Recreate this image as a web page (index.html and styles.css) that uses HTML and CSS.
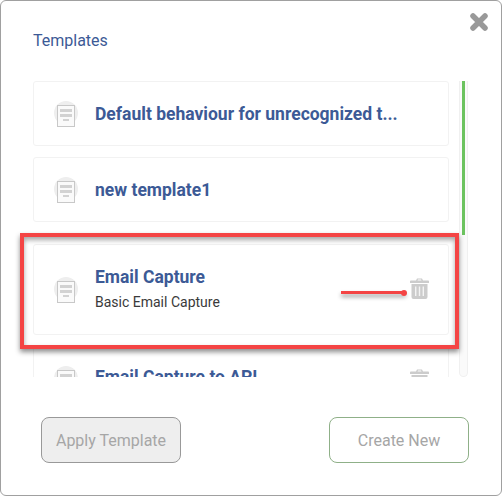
FILE: index.html
```html
<!DOCTYPE html>
<html lang="en">
<head>
<meta charset="utf-8">
<title>Templates</title>
<link rel="stylesheet" href="styles.css">
</head>
<body>
<svg class="defs" width="0" height="0" aria-hidden="true">
  <symbol id="doc" viewBox="0 0 24 26">
    <circle cx="12" cy="12" r="12" fill="#eeeeee"/>
    <rect x="3.500" y="4.500" width="17" height="21" fill="#fafafa" stroke="#c8c8c8" stroke-width="1"/>
    <rect x="6" y="8" width="12" height="3" fill="#d2d2d2"/>
    <rect x="6" y="13" width="12" height="3" fill="#d2d2d2"/>
    <rect x="9" y="18" width="6" height="2" fill="#d2d2d2"/>
  </symbol>
  <symbol id="trash" viewBox="0 0 19 21">
    <path fill="#cccccc" d="M6 2.600 7 .6h5l1 2h5.200a.8.8 0 0 1 .8.800V5H0V3.400a.8.8 0 0 1 .8-.8zM7.500 2.600h4l-.5-1H8zM1.500 6h16v13a2 2 0 0 1-2 2h-12a2 2 0 0 1-2-2z"/>
    <path fill="#f4f4f4" d="M5 8.500h1.400v9.500H5zM8.800 8.500h1.400v9.500H8.800zM12.600 8.500H14v9.500h-1.400z"/>
  </symbol>
</svg>
<main class="modal">
  <button class="close" type="button" aria-label="Close">
    <svg width="18" height="18" viewBox="0 0 18 18"><path d="M3 3 15 15M15 3 3 15" stroke="#999999" stroke-width="5.500" stroke-linecap="round"/></svg>
  </button>
  <h1 class="title">Templates</h1>
  <div class="list-wrap">
    <div class="list">
      <article class="card">
        <svg class="doc"><use href="#doc"/></svg>
        <div class="text"><h2 class="name">Default behaviour for unrecognized t...</h2></div>
      </article>
      <article class="card">
        <svg class="doc"><use href="#doc"/></svg>
        <div class="text"><h2 class="name">new template1</h2></div>
      </article>
      <article class="card card-tall">
        <svg class="doc"><use href="#doc"/></svg>
        <div class="text text-stacked">
          <h2 class="name">Email Capture</h2>
          <p class="desc">Basic Email Capture</p>
        </div>
        <svg class="trash"><use href="#trash"/></svg>
      </article>
      <article class="card card-clipped">
        <svg class="doc"><use href="#doc"/></svg>
        <div class="text"><h2 class="name">Email Capture to API</h2></div>
        <svg class="trash"><use href="#trash"/></svg>
      </article>
    </div>
    <div class="scrollbar"><div class="thumb"></div></div>
  </div>
  <footer class="actions">
    <button class="btn btn-apply" type="button">Apply Template</button>
    <button class="btn btn-create" type="button">Create New</button>
  </footer>
  <div class="callout"></div>
  <div class="arrow"></div>
</main>
</body>
</html>
```
FILE: styles.css
```css
* { box-sizing: border-box; }
html, body { margin: 0; padding: 0; }
body {
  width: 502px;
  height: 496px;
  overflow: hidden;
  background: #ffffff;
  font-family: Roboto, "Liberation Sans", sans-serif;
}
.defs { position: absolute; }
.modal {
  position: relative;
  width: 502px;
  height: 496px;
  border: 1px solid #a0a0a0;
  border-radius: 6px;
  background: #ffffff;
  padding: 30px 32px 32px 32px;
  display: flex;
  flex-direction: column;
}
.close {
  position: absolute;
  top: 12px;
  right: 13px;
  width: 18px;
  height: 18px;
  padding: 0;
  border: 0;
  background: none;
  display: flex;
}
.title {
  margin: 0 0 31px 0;
  height: 19px;
  font-size: 16px;
  line-height: 19px;
  font-weight: 400;
  color: #3c5a96;
}
.list-wrap {
  height: 296px;
  display: flex;
  gap: 10px;
  overflow: hidden;
}
.list {
  width: 416px;
  display: flex;
  flex-direction: column;
  gap: 11px;
  overflow: hidden;
}
.card {
  flex: none;
  height: 65px;
  border: 1px solid #f2f2f2;
  border-radius: 3px;
  padding: 0 19px 0 20px;
  display: flex;
  align-items: center;
  gap: 17px;
}
.card-tall {
  height: 91px;
  margin-top: 11px;
}
.card-clipped {
  height: 91px;
  align-items: flex-start;
  padding-top: 19px;
}
.card-clipped .trash { margin-top: 3px; }
.doc {
  flex: none;
  width: 24px;
  height: 26px;
}
.text {
  flex: 1;
  min-width: 0;
}
.text-stacked { margin-bottom: 3px; }
.name {
  margin: 0;
  font-size: 17.500px;
  line-height: 22px;
  font-weight: 700;
  color: #3c5a96;
  white-space: nowrap;
}
.desc {
  margin: 5px 0 0 0;
  font-size: 14px;
  line-height: 18px;
  color: #3a3a3a;
}
.trash {
  flex: none;
  width: 19px;
  height: 21px;
  margin-bottom: 2px;
}
.scrollbar {
  width: 9px;
  height: 296px;
  border: 1px solid #f0f0f0;
  border-top: 0;
  border-radius: 0 0 5px 5px;
  background: #fafafa;
  padding: 0 2px;
}
.thumb {
  width: 3px;
  height: 154px;
  background: #6cc35f;
}
.actions {
  margin-top: 40px;
  padding: 0 0 0 8px;
  display: flex;
  justify-content: space-between;
}
.btn {
  width: 140px;
  height: 46px;
  border-radius: 8px;
  font-family: inherit;
  font-size: 16px;
  color: #a6a6a6;
  padding: 0;
}
.btn-apply {
  background: #eeeeee;
  border: 1px solid #999999;
}
.btn-create {
  background: #ffffff;
  border: 1px solid #8fb088;
}
.callout {
  position: absolute;
  left: 19px;
  top: 232px;
  width: 439px;
  height: 116px;
  border: 4px solid #f44444;
  box-shadow: 0 3px 5px rgba(0, 0, 0, 0.45), inset 0 3px 5px rgba(0, 0, 0, 0.35);
}
.arrow {
  position: absolute;
  left: 340px;
  top: 290px;
  width: 65px;
  height: 3px;
  background: #f44444;
  box-shadow: 0 3px 4px rgba(0, 0, 0, 0.4);
}
.arrow::after {
  content: "";
  position: absolute;
  right: -1px;
  top: -1.500px;
  width: 6px;
  height: 6px;
  border-radius: 50%;
  background: #f44444;
}
```
